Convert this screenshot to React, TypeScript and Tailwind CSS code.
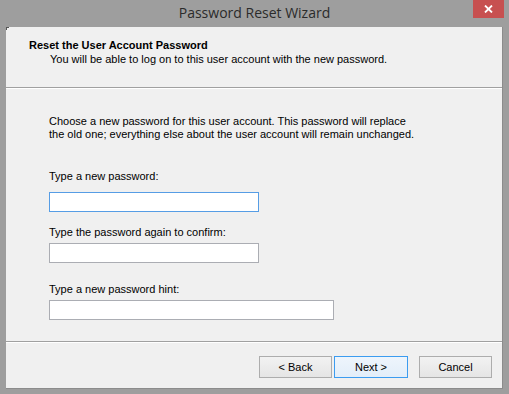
import React from "react";

export default function App() {
  const ui = { fontFamily: '"Liberation Sans", Arial, sans-serif' };
  return (
    <div className="relative w-[509px] h-[394px] bg-[#9e9e9e] overflow-hidden" style={ui}>
      {/* title bar */}
      <div className="relative h-[27px] flex items-center justify-center">
        <span
          className="text-[14px] text-[#2b2b2b] leading-none pb-[1px]"
          style={{ fontFamily: '"Open Sans", "Noto Sans", sans-serif' }}
        >
          Password Reset Wizard
        </span>
        <div className="absolute right-[5px] top-0 w-[31px] h-[18px] bg-[#c75050] flex items-center justify-center">
          <svg width="9" height="8" viewBox="0 0 9 8">
            <path d="M1 0.5 L8 7.5 M8 0.5 L1 7.5" stroke="white" strokeWidth="1.8" />
          </svg>
        </div>
      </div>

      {/* client */}
      <div className="relative ml-[6px] w-[497px] h-[362px] bg-[#f0f0f0] flex flex-col border-r border-b border-[#8c8c8c]">
        <div className="absolute left-0 top-0 w-[3px] h-[3px] border-l border-t border-[#555]" />
        {/* header */}
        <div className="h-[60px] pt-[12px] text-[11px] text-black">
          <div className="pl-[23px] font-bold leading-[13px]">Reset the User Account Password</div>
          <div className="pl-[44px] mt-[1px] leading-[13px]">
            You will be able to log on to this user account with the new password.
          </div>
        </div>
        <div className="h-[2px] border-t border-[#a0a0a0] border-b border-b-white" />

        {/* body */}
        <div className="flex-1 pl-[43px] text-[11px] text-black">
          <div className="mt-[26px] leading-[13px]">
            <div>Choose a new password for this user account. This password will replace</div>
            <div>the old one; everything else about the user account will remain unchanged.</div>
          </div>
          <div className="mt-[29px] leading-[13px]">Type a new password:</div>
          <div className="mt-[9px] w-[210px] h-[20px] bg-white border border-[#569de5]" />
          <div className="mt-[14px] leading-[13px]">Type the password again to confirm:</div>
          <div className="mt-[4px] w-[210px] h-[20px] bg-white border border-[#abadb3]" />
          <div className="mt-[20px] leading-[13px]">Type a new password hint:</div>
          <div className="mt-[4px] w-[285px] h-[20px] bg-white border border-[#abadb3]" />
        </div>

        <div className="h-[2px] border-t border-[#a0a0a0] border-b border-b-white" />

        {/* footer */}
        <div className="h-[45px] pt-[13px] flex justify-end pr-[10px] text-[11px] text-black">
          <button className="w-[73px] h-[22px] border border-[#adadad] bg-gradient-to-b from-[#f2f2f2] to-[#e5e5e5] leading-none">
            &lt; Back
          </button>
          <button className="ml-[2px] w-[74px] h-[22px] border border-[#3c9cf0] bg-gradient-to-b from-[#eef5fc] to-[#e3eef9] leading-none">
            Next &gt;
          </button>
          <button className="ml-[11px] w-[73px] h-[22px] border border-[#adadad] bg-gradient-to-b from-[#f2f2f2] to-[#e5e5e5] leading-none">
            Cancel
          </button>
        </div>
      </div>
    </div>
  );
}
